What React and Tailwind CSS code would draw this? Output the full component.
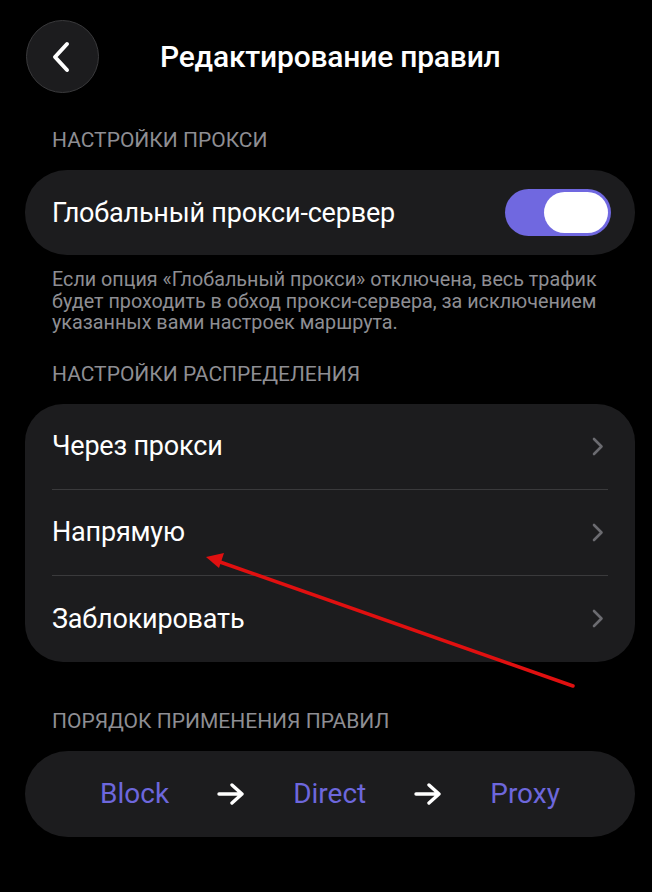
import React from "react";

const font = { fontFamily: "Roboto, 'Noto Sans', sans-serif" };

function Chevron() {
  return (
    <svg width="12" height="19" viewBox="0 0 12 19" fill="none">
      <path d="M2 2l7.5 7.5L2 17" stroke="#6b6b70" strokeWidth="2.6" strokeLinecap="round" strokeLinejoin="round" />
    </svg>
  );
}

function Arrow() {
  return (
    <svg width="28" height="22" viewBox="0 0 28 22" fill="none">
      <path d="M2 11h23M15 2l10 9-10 9" stroke="#fff" strokeWidth="3.4" strokeLinecap="round" strokeLinejoin="round" />
    </svg>
  );
}

function Row({ label, last }) {
  return (
    <div className="px-[27px]">
      <div className={"h-[86px] flex items-center justify-between " + (last ? "" : "border-b border-[#3a3a3c]")}>
        <span className="text-[27px] leading-[32px] text-white tracking-[-0.2px]">{label}</span>
        <span className="mr-[4px]"><Chevron /></span>
      </div>
    </div>
  );
}

export default function App() {
  return (
    <div className="relative w-[652px] h-[892px] bg-black overflow-hidden" style={font}>
      <div className="flex items-center pt-[20px] px-[26px]">
        <button className="w-[73px] h-[73px] rounded-full bg-[#1c1c1e] border border-[#3a3a3c] flex items-center justify-center">
          <svg width="20" height="32" viewBox="0 0 20 32" fill="none" className="mr-[3px]">
            <path d="M16 3L4 16l12 13" stroke="#fff" strokeWidth="4" strokeLinecap="round" strokeLinejoin="round" />
          </svg>
        </button>
        <h1 className="ml-[61px] text-[30px] leading-[36px] font-medium text-white tracking-[-0.2px]">Редактирование правил</h1>
      </div>

      <div className="mt-[35px] px-[52px] text-[21px] leading-[24px] text-[#8e8e93]">НАСТРОЙКИ ПРОКСИ</div>

      <div className="mt-[18px] ml-[25px] mr-[17px] h-[85px] rounded-[42px] bg-[#1c1c1e] flex items-center justify-between pl-[27px] pr-[24px]">
        <span className="text-[27px] leading-[32px] text-white tracking-[-0.2px]">Глобальный прокси-сервер</span>
        <div className="w-[106px] h-[47px] rounded-full bg-[#7068e0] flex items-center justify-end pr-[3px]">
          <div className="w-[64px] h-[41px] rounded-full bg-white" />
        </div>
      </div>

      <p className="mt-[14px] px-[52px] text-[19.75px] leading-[21.5px] text-[#8e8e93] whitespace-nowrap">
        Если опция «Глобальный прокси» отключена, весь трафик
        <br />
        будет проходить в обход прокси-сервера, за исключением
        <br />
        указанных вами настроек маршрута.
      </p>

      <div className="mt-[28px] px-[52px] text-[21px] leading-[24px] text-[#8e8e93]">НАСТРОЙКИ РАСПРЕДЕЛЕНИЯ</div>

      <div className="mt-[18px] ml-[25px] mr-[17px] rounded-[38px] bg-[#1c1c1e]">
        <Row label="Через прокси" />
        <Row label="Напрямую" />
        <Row label="Заблокировать" last />
      </div>

      <div className="mt-[47px] px-[52px] text-[21px] leading-[24px] text-[#8e8e93]">ПОРЯДОК ПРИМЕНЕНИЯ ПРАВИЛ</div>

      <div className="mt-[18px] ml-[25px] mr-[17px] h-[86px] rounded-full bg-[#1c1c1e] flex items-center justify-center gap-[48px] text-[28px] leading-[32px] text-[#6d67dc]">
        <span>Block</span>
        <Arrow />
        <span>Direct</span>
        <Arrow />
        <span>Proxy</span>
      </div>

      <svg className="absolute inset-0 pointer-events-none" width="652" height="892" viewBox="0 0 652 892">
        <line x1="573" y1="686" x2="220" y2="562" stroke="#e01010" strokeWidth="3.5" strokeLinecap="round" />
        <path d="M206 557L224 553L219 568Z" fill="#e01010" />
      </svg>
    </div>
  );
}
